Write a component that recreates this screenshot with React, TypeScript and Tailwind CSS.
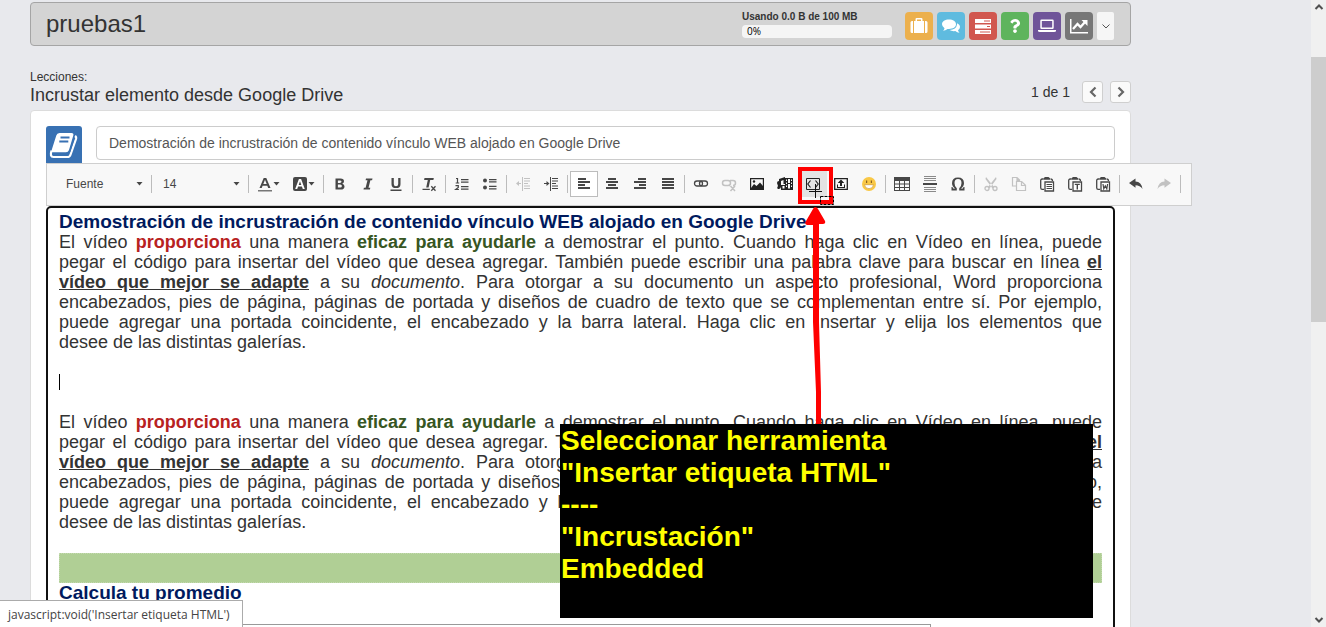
import type { ReactNode } from "react";
import { FaQuestion } from "react-icons/fa";

const ink = "#474747";

function Glyph({ children, faded = false }: { children: ReactNode; faded?: boolean }) {
  return (
    <svg
      viewBox="0 0 16 16"
      className={faded ? "size-4 shrink-0 opacity-30" : "size-4 shrink-0"}
      fill={ink}
      stroke="none"
      aria-hidden="true"
    >
      {children}
    </svg>
  );
}

function Caret() {
  return (
    <svg viewBox="0 0 7 4" className="h-1 w-[7px] shrink-0" fill={ink} aria-hidden="true">
      <path d="M0.5 0h6L3.5 3.5z" />
    </svg>
  );
}

function Separator() {
  return <span className="mx-0.5 h-[18px] w-px shrink-0 bg-[#bcbcbc]" />;
}

function Tool({ label, active = false, children }: { label: string; active?: boolean; children: ReactNode }) {
  return (
    <button
      type="button"
      aria-label={label}
      title={label}
      className={
        active
          ? "flex h-[26px] w-7 shrink-0 items-center justify-center border border-[#bcbcbc] bg-white"
          : "flex h-[26px] w-7 shrink-0 items-center justify-center"
      }
    >
      {children}
    </button>
  );
}

function Lines({ rows }: { rows: [number, number][] }) {
  return (
    <>
      {rows.map(([x, w], i) => (
        <rect key={i} x={x} y={2 + i * 3} width={w} height="2" />
      ))}
    </>
  );
}

const clipboardBack = (
  <>
    <path d="M4.500 3H3.200Q1.700 3 1.700 4.500v7.200Q1.700 13.300 3.200 13.300H5" fill="none" stroke={ink} strokeWidth="1.300" />
    <path d="M4.500 3.700V2.300L6 1h3.500L11 2.300v1.400z" />
    <path d="M11.500 3q2 0 2 2" fill="none" stroke={ink} strokeWidth="1.300" />
    <path d="M6 6h8.500v9H6z" fill="#fff" stroke={ink} strokeWidth="1.300" />
  </>
);

function Toolbar() {
  return (
    <div
      role="toolbar"
      aria-label="Editor"
      className="-mr-[77px] flex h-[43px] items-center border border-[#cfcfcf] bg-[#f8f8f8] pb-px pl-[5px] text-[12px] text-[#474747]"
    >
      <div className="grid h-[26px] w-[97px] shrink-0 items-center">
        <select aria-label="Fuente" className="col-start-1 row-start-1 appearance-none bg-transparent pl-3.5">
          <option>Fuente</option>
        </select>
        <span className="pointer-events-none col-start-1 row-start-1 mr-1.5 justify-self-end">
          <Caret />
        </span>
      </div>
      <Separator />
      <div className="grid h-[26px] w-[92px] shrink-0 items-center">
        <select aria-label="Tamaño" className="col-start-1 row-start-1 appearance-none bg-transparent pl-[9px]">
          <option>14</option>
        </select>
        <span className="pointer-events-none col-start-1 row-start-1 mr-1.5 justify-self-end">
          <Caret />
        </span>
      </div>
      <Separator />
      <button type="button" aria-label="Color de texto" className="flex h-[26px] w-[35px] shrink-0 items-center justify-center">
        <Glyph>
          <path d="M2.500 12 6.700 2h2.600l4.200 10h-2.300l-.9-2.300H5.600L4.700 12zM6.300 8h3.400L8 3.800z" />
          <rect x="1" y="14" width="14" height="1.500" fill="#777" />
        </Glyph>
        <Caret />
      </button>
      <button type="button" aria-label="Color de fondo" className="flex h-[26px] w-[35px] shrink-0 items-center justify-center">
        <Glyph>
          <rect x="1" y="1" width="14" height="14" rx="2" />
          <path
            fill="#fff"
            fillRule="evenodd"
            d="M3.200 13 6.900 3h2.200l3.700 10h-2l-.9-2.500H6.100L5.200 13zM6.700 9h2.600L8 5.200z"
          />
        </Glyph>
        <Caret />
      </button>
      <Separator />
      <Tool label="Negrita">
        <Glyph>
          <path
            fillRule="evenodd"
            d="M3.500 2.500h5q3.500 0 3.500 2.800 0 1.900-1.700 2.400 2.200.5 2.200 2.700 0 3.100-3.700 3.100H3.500zM5.900 4.400v2.500h2q1.600 0 1.600-1.300 0-1.200-1.600-1.200zm0 4.200v3h2.300q1.700 0 1.700-1.500t-1.700-1.500z"
          />
        </Glyph>
      </Tool>
      <Tool label="Cursiva">
        <Glyph>
          <path d="M6 2.500h6.500l-.4 1.700h-1.700L8.500 11.800h1.800l-.4 1.700H3.500l.4-1.700h1.700l1.900-7.600H5.600z" />
        </Glyph>
      </Tool>
      <Tool label="Subrayado">
        <Glyph>
          <path d="M3.500 2h2.300v6q0 2.200 2.200 2.200T10.200 8V2h2.300v6.200q0 3.900-4.500 3.900T3.500 8.200zM2.500 13.500h11V15h-11z" />
        </Glyph>
      </Tool>
      <Separator />
      <Tool label="Eliminar formato">
        <Glyph>
          <path d="M3.500 2h9.300l-.4 2H9.200l-1.600 7.500H5.200L6.800 4H3.100zM1.500 12.700h7.300v1.200H1.500z" />
          <path d="m10.300 10.300 4.200 4.400m0-4.400-4.200 4.400" stroke={ink} strokeWidth="1.300" />
        </Glyph>
      </Tool>
      <Separator />
      <Tool label="Lista numerada">
        <Glyph>
          <path
            d="M2 2.500h1.500V7M1.700 7h3.500M1.500 9.700h2.800v1.800l-2.600 2h3.200"
            fill="none"
            stroke={ink}
            strokeWidth="1.200"
          />
          <path d="M7 3h7.500v1.200H7zm0 2.500h7.500v1.200H7zm0 4.500h7.500v1.200H7zm0 2.500h7.500v1.200H7z" />
        </Glyph>
      </Tool>
      <Tool label="Lista con viñetas">
        <Glyph>
          <circle cx="3" cy="4.500" r="2" />
          <circle cx="3" cy="11.500" r="2" />
          <path d="M7 3h7.500v1.200H7zm0 2.300h7.500v1.200H7zm0 4.500h7.500V11H7zm0 2.500h7.500v1.200H7z" />
        </Glyph>
      </Tool>
      <Separator />
      <Tool label="Disminuir sangría">
        <Glyph faded>
          <path d="M9 2h6v1H9zm0 2.500h6v1H9zM9 7h4v1H9zm0 2.500h6v1H9zM9 12h6v1H9zM7 1h1v14H7zM3 7h3v1H3z" />
          <path d="M1 7.500 4 5v5z" />
        </Glyph>
      </Tool>
      <Tool label="Aumentar sangría">
        <Glyph>
          <path d="M9 2h6v1H9zm0 2.500h6v1H9zM9 7h4v1H9zm0 2.500h6v1H9zM9 12h6v1H9zM7 1h1v14H7zM1 7h3v1H1z" />
          <path d="M6.500 7.500 3.500 5v5z" />
        </Glyph>
      </Tool>
      <Separator />
      <Tool label="Alinear a la izquierda" active>
        <Glyph>
          <Lines rows={[[2, 8], [2, 12], [2, 7], [2, 12]]} />
        </Glyph>
      </Tool>
      <Tool label="Centrar">
        <Glyph>
          <Lines rows={[[4, 8], [2, 12], [4, 8], [2, 12]]} />
        </Glyph>
      </Tool>
      <Tool label="Alinear a la derecha">
        <Glyph>
          <Lines rows={[[6, 8], [2, 12], [7, 7], [2, 12]]} />
        </Glyph>
      </Tool>
      <Tool label="Justificar">
        <Glyph>
          <Lines rows={[[2, 12], [2, 12], [2, 12], [2, 12]]} />
        </Glyph>
      </Tool>
      <Separator />
      <Tool label="Insertar vínculo">
        <Glyph>
          <g fill="none" stroke={ink} strokeWidth="1.300">
            <rect x="1.500" y="5" width="8" height="5" rx="2.500" />
            <rect x="6.500" y="5" width="8" height="5" rx="2.500" />
          </g>
        </Glyph>
      </Tool>
      <Tool label="Eliminar vínculo">
        <Glyph faded>
          <g fill="none" stroke={ink} strokeWidth="1.500">
            <rect x="1.500" y="4.500" width="8" height="5" rx="2.500" />
            <path d="M9 9.500H8M9 4.500h3q2.500 0 2.500 2.500T12 9.500M9.500 10l4.500 5m0-5-4.500 5" />
          </g>
        </Glyph>
      </Tool>
      <Tool label="Imagen">
        <Glyph>
          <path fillRule="evenodd" fill="#222" d="M1 2h14v12H1zM2.200 3.200v9.600h11.600V3.200z" />
          <path fill="#222" d="m2 12 3-4 2.500 2L11 6.500l3 3.500v3H2z" />
          <circle cx="5" cy="5.500" r="1.200" fill="#222" />
        </Glyph>
      </Tool>
      <Tool label="Insertar multimedia">
        <Glyph>
          <path d="M0 7Q0 5 2 5V3l6-2v7H6.500V4L4 5v6q-.5 2.500-3 2-1.500-1 0-3z" fill="#222" />
          <path d="M8 2h8v12H4V9h4z" fill="#222" />
          <path
            d="M9 3.500h1V5H9zm0 3h1V8H9zm0 3h1V11H9zm5-6h1V5h-1zm0 3h1V8h-1zm0 3h1V11h-1zM11 3h2v4h-2zm0 5h2v4.500h-2zM5.500 10h2v2.500h-2z"
            fill="#f8f8f8"
          />
        </Glyph>
      </Tool>
      <button
        type="button"
        aria-label="Insertar etiqueta HTML"
        className="flex h-[26px] w-7 shrink-0 items-center justify-center bg-[#e3e3e3]"
      >
        <Glyph>
          <path d="M1.500 2.500h13v11h-13z" fill="none" stroke="#222" />
          <path d="M5.500 4.500 2.800 8l2.700 3.500M10.500 4.500 13.200 8l-2.700 3.500" fill="none" stroke="#222" strokeWidth="1.200" />
        </Glyph>
      </button>
      <Tool label="Subir archivo">
        <Glyph>
          <path d="M1.700 2.700h12.600v10.600H1.700z" fill="none" stroke="#222" strokeWidth="1.300" />
          <path d="m8 3.500 3.300 3.500H9v3H7V7H4.700zM4 8.500h1V11h6V8.500h1V12H4z" fill="#222" />
        </Glyph>
      </Tool>
      <Tool label="Emoticonos">
        <Glyph>
          <circle cx="8" cy="8" r="7" fill="#f9c846" />
          <path d="M3.500 8.700h9Q12 12.700 8 12.700T3.500 8.700z" fill="#fff" stroke="#c8912f" strokeWidth=".6" />
          <path d="M5 4.500h1.200V7H5zm4.800 0H11V7H9.800z" fill="#8a6221" />
        </Glyph>
      </Tool>
      <Separator />
      <Tool label="Tabla">
        <Glyph>
          <path
            fillRule="evenodd"
            d="M0 1h16v14H0zM1 5v2.500h4V5zm5 0v2.500h4V5zm5 0v2.500h4V5zM1 8.500V11h4V8.500zm5 0V11h4V8.500zm5 0V11h4V8.500zM1 12v2h4v-2zm5 0v2h4v-2zm5 0v2h4v-2z"
          />
        </Glyph>
      </Tool>
      <Tool label="Línea horizontal">
        <Glyph>
          <path d="M2 0h12v1H2zm0 2h12v1H2zm0 2h12v1H2zm0 7h12v1H2zm0 2h12v1H2zm0 2h12v1H2z" fill="#8a8a8a" />
          <path d="M1 7h14v2H1z" />
        </Glyph>
      </Tool>
      <Tool label="Carácter especial">
        <Glyph>
          <path d="M1.500 14.500V11h1l.6 1.500h2.200Q2 10.500 2 7.200 2 1.500 8 1.500t6 5.700q0 3.300-3.300 5.300h2.200l.6-1.500h1v3.500H9.200v-2.200q2.300-1.700 2.300-5.200 0-4-3.500-4t-3.500 4q0 3.500 2.300 5.200v2.200z" />
        </Glyph>
      </Tool>
      <Separator />
      <Tool label="Cortar">
        <Glyph faded>
          <path d="m3 1 8 10-1.500 1.500L2.500 3zM13 1 5 11l1.500 1.500 7-9.500z" />
          <circle cx="4" cy="12.500" r="2" fill="none" stroke={ink} strokeWidth="1.300" />
          <circle cx="12" cy="12.500" r="2" fill="none" stroke={ink} strokeWidth="1.300" />
        </Glyph>
      </Tool>
      <Tool label="Copiar">
        <Glyph faded>
          <path
            d="M5 10H1.500V1.500H6l3 3M6 1.500V4.500h3M5.500 5.500h5.200l3.800 3.800v5.200h-9zM10.500 5.500v4h4"
            fill="none"
            stroke={ink}
            strokeWidth="1.200"
          />
        </Glyph>
      </Tool>
      <Tool label="Pegar">
        <Glyph>
          {clipboardBack}
          <path d="M7.500 8H13v1H7.500zm0 2H13v1H7.500zm0 2H13v1H7.500z" />
        </Glyph>
      </Tool>
      <Tool label="Pegar como texto">
        <Glyph>
          {clipboardBack}
          <path d="M7.800 7.700h5V9H11v4.500H9.600V9H7.800z" />
        </Glyph>
      </Tool>
      <Tool label="Pegar desde Word">
        <Glyph>
          {clipboardBack}
          <path d="m8 8 .8 4.800 1.500-3 1.500 3 .8-4.800" fill="none" stroke={ink} strokeWidth="1.200" />
        </Glyph>
      </Tool>
      <Separator />
      <Tool label="Deshacer">
        <Glyph>
          <path d="M1 7 7.500 2.500v3q6 .3 7 7.500Q12 9.300 7.500 9.300v2.500z" />
        </Glyph>
      </Tool>
      <Tool label="Rehacer">
        <Glyph faded>
          <path d="M15 7 8.500 2.500v3q-6 .3-7 7.500Q4 9.300 8.500 9.300v2.500z" />
        </Glyph>
      </Tool>
      <Separator />
    </div>
  );
}

function AppButton({ label, color, children }: { label: string; color: string; children: ReactNode }) {
  return (
    <a
      href="#"
      aria-label={label}
      className={`flex size-7 items-center justify-center rounded-[4px] text-white ${color}`}
    >
      {children}
    </a>
  );
}

function HeaderIcon({ children }: { children: ReactNode }) {
  return (
    <svg viewBox="0 0 20 18" className="h-[18px] w-5" fill="currentColor" aria-hidden="true">
      {children}
    </svg>
  );
}

function Header() {
  return (
    <header className="flex h-11 items-center rounded-[4px] border border-[#a5a5a5] bg-[#d4d4d4] pr-4 pl-[15px]">
      <h1 className="flex-1 text-[24px] leading-7 text-[#333]">pruebas1</h1>
      <div className="mr-[13px] w-[150px] text-[10px] text-[#333]">
        <p className="mt-[-2px] leading-[16px] font-bold">Usando 0.0 B de 100 MB</p>
        <div className="h-[13px] rounded-[4px] bg-[#f5f5f5] pl-[5px] font-['Open_Sans',sans-serif] leading-[13px] text-black">
          0%
        </div>
      </div>
      <nav className="mt-1 flex gap-1">
        <AppButton label="Recursos" color="bg-[#ecb04d]">
          <HeaderIcon>
            <path
              fillRule="evenodd"
              d="M6.500 4V2.200Q6.500 1 7.700 1h4.600q1.200 0 1.200 1.200V4H15v12H5V4zM8 4h4V2.500H8zM4 4v12H3q-1.500 0-1.500-1.500v-9Q1.500 4 3 4zm12 0h1q1.500 0 1.500 1.500v9Q18.500 16 17 16h-1z"
            />
          </HeaderIcon>
        </AppButton>
        <AppButton label="Foros" color="bg-[#5fbbdf]">
          <HeaderIcon>
            <path d="M8 2.500c4 0 7 2 7 4.800S12 12 8 12l-1.500-.1Q4.500 13.500 2 13.700q1.200-1 1.500-2.500Q1 9.700 1 7.300C1 4.500 4 2.500 8 2.500z" />
            <path d="M16 6.200c1.800.8 3 2.100 3 3.700q0 2-2 3.400.3 1.500 1.500 2.400-2.500-.1-4.200-1.600-3.300.5-5.800-1 6.800-.3 7.500-5.500z" />
          </HeaderIcon>
        </AppButton>
        <AppButton label="Tareas" color="bg-[#d1574f]">
          <HeaderIcon>
            <path fillRule="evenodd" d="M2 2h16v4H2zm9 1.500v1h6v-1zM2 7.500h16v4H2zM14 9v1h3V9zM2 13h16v4H2zm5 1.500v1h10v-1z" />
          </HeaderIcon>
        </AppButton>
        <AppButton label="Ayuda" color="bg-[#5eb45d]">
          <FaQuestion className="size-3.5" />
        </AppButton>
        <AppButton label="Aula" color="bg-[#6f5499]">
          <HeaderIcon>
            <path
              fillRule="evenodd"
              d="M4.500 2.500h11q1.200 0 1.200 1.200v7.100q0 1.200-1.200 1.200h-11q-1.200 0-1.200-1.200V3.700q0-1.200 1.200-1.200zM4.800 4v6.500h10.400V4zM1 13h18v1q0 1-2 1H3q-2 0-2-1z"
            />
          </HeaderIcon>
        </AppButton>
        <AppButton label="Estadísticas" color="bg-[#777777]">
          <HeaderIcon>
            <path d="M1 2h1.500v13H19v1.500H1z" />
            <path d="m4 12 4.500-5 3 3 4.500-5" fill="none" stroke="currentColor" strokeWidth="2.300" />
            <path d="M12.500 3h6v6z" />
          </HeaderIcon>
        </AppButton>
        <button
          type="button"
          aria-label="Más opciones"
          className="flex h-7 w-[17px] items-center justify-center rounded-[2px] bg-[#f6f6f6]"
        >
          <svg viewBox="0 0 8 5" className="h-[5px] w-2" fill="none" stroke="#555" aria-hidden="true">
            <path d="m.5.5 3.500 3.500L7.500.5" />
          </svg>
        </button>
      </nav>
    </header>
  );
}

function PagerButton({ label, path }: { label: string; path: string }) {
  return (
    <button
      type="button"
      aria-label={label}
      className="flex h-[22px] w-[21px] items-center justify-center rounded-[3px] border border-[#cfcfcf] bg-[#fafafa]"
    >
      <svg viewBox="0 0 8 12" className="h-3 w-2" fill="none" stroke="#666" strokeWidth="2.200" aria-hidden="true">
        <path d={path} />
      </svg>
    </button>
  );
}

function FullLine({ children }: { children: ReactNode }) {
  return <span className="block [text-align-last:justify]">{children} </span>;
}

function Paragraph() {
  return (
    <p className="text-[18px]">
      <FullLine>
        El vídeo <strong className="text-[#b8221f]">proporciona</strong> una manera{" "}
        <strong className="text-[#375623]">eficaz para ayudarle</strong> a demostrar el punto. Cuando haga clic en
        Vídeo en línea, puede
      </FullLine>
      <FullLine>
        pegar el código para insertar del vídeo que desea agregar. También puede escribir una palabra clave para buscar
        en línea <strong className="underline">el</strong>
      </FullLine>
      <FullLine>
        <strong className="underline">vídeo que mejor se adapte</strong> a su <em>documento</em>. Para otorgar a su
        documento un aspecto profesional, Word proporciona
      </FullLine>
      <FullLine>
        encabezados, pies de página, páginas de portada y diseños de cuadro de texto que se complementan entre sí. Por
        ejemplo,
      </FullLine>
      <FullLine>
        puede agregar una portada coincidente, el encabezado y la barra lateral. Haga clic en Insertar y elija los
        elementos que
      </FullLine>
      <span className="block">desee de las distintas galerías.</span>
    </p>
  );
}

function Editor() {
  return (
    <div className="min-h-[500px] rounded-[5px] border-2 border-[#111] bg-white px-[11px] pt-1 text-[19px] leading-5 text-[#333]">
      <h3 className="font-bold text-[#001a5e]">
        Demostración de incrustración de contenido vínculo WEB alojado en Google Drive
      </h3>
      <Paragraph />
      <div className="flex h-[60px] items-center">
        <span className="h-4 w-px bg-black" />
      </div>
      <Paragraph />
      <div className="mt-[21px] h-[30px] border border-dotted border-[#c3d9ae] bg-[#b0cf95]" />
      <h3 className="font-bold text-[#001a5e]">Calcula tu promedio</h3>
      <div className="mt-[21px] h-10 max-w-[872px] border border-[#999]" />
    </div>
  );
}

function Annotations() {
  return (
    <>
      <svg
        viewBox="0 0 50 260"
        className="pointer-events-none absolute top-[166px] left-[795px] h-[260px] w-[50px]"
        aria-hidden="true"
      >
        <path d="M5 3h31v33H5z" fill="none" stroke="#f00" strokeWidth="4" />
        <path d="M20.500 18v14M14 25.500h13" stroke="#111" fill="none" />
        <path d="M25.500 30.500h13v8h-13z" fill="none" stroke="#000" strokeDasharray="3 1" />
        <path d="M20 41Q22 41 23 43l7 12q1 3-2 3h-4v98l2 70v32h-5v-32l-3-70V59h-6q-3-1-1-4l7-12q1-2 2-2z" fill="#f00" />
      </svg>
      <aside className="absolute top-[424px] left-[560px] h-[194px] w-[533px] bg-black pt-px pl-px text-[28px] leading-8 font-bold text-[#ff0]">
        <p>Seleccionar herramienta</p>
        <p>"Insertar etiqueta HTML"</p>
        <p>----</p>
        <p>"Incrustación"</p>
        <p>Embedded</p>
      </aside>
      <div className="absolute bottom-0 left-0 h-[27px] border-t border-r border-[#ababab] bg-white pr-3 pl-2 font-['Open_Sans',sans-serif] text-[12px] leading-[28px] text-[#444]">
        javascript:void('Insertar etiqueta HTML')
      </div>
    </>
  );
}

export default function App() {
  return (
    <div className="relative flex h-screen overflow-hidden bg-[#e8e9ed] font-['Liberation_Sans',Arial,sans-serif] text-[#333]">
      <main className="min-w-0 flex-1 pt-0.5 pr-[180px] pl-[30px]">
        <Header />
        <div className="flex h-16 items-end pb-[5px]">
          <div className="flex-1">
            <p className="text-[12px] leading-4">Lecciones:</p>
            <h2 className="text-[18px] leading-5">Incrustar elemento desde Google Drive</h2>
          </div>
          <div className="flex items-center pb-0.5 text-[14px]">
            <span className="mr-3">1 de 1</span>
            <div className="flex gap-[7px]">
              <PagerButton label="Anterior" path="M6.500 1.500 2 6l4.500 4.500" />
              <PagerButton label="Siguiente" path="M1.500 1.500 6 6l-4.500 4.500" />
            </div>
          </div>
        </div>
        <section className="rounded-t-[4px] border border-[#dcdcdc] bg-white px-[15px] pt-[15px]">
          <div className="flex gap-3.5">
            <div className="flex h-[37px] w-9 items-center justify-center rounded-t-[3px] bg-[#3871b3]">
              <svg viewBox="0 0 32 32" className="size-8" fill="none" aria-hidden="true">
                <path
                  d="M11.500 4h12q2.500 0 1.800 2.500L21 21q-.8 2.300-3 2.300H5q-2 0-1.300-2.300L8.300 6.500Q9 4 11.500 4z"
                  fill="#fff"
                />
                <path
                  d="M3.500 21.500q-2 6.500 2 6.500h14q2.300 0 3-2.300L28 10q.6-2-1-3"
                  stroke="#fff"
                  strokeWidth="2.200"
                />
                <path d="M12.500 8.500h9M11.300 12.500h9" stroke="#3871b3" strokeWidth="1.800" />
                <path d="M5.500 25h13.300q2.200 0 3-2.500L26 9" stroke="#3871b3" strokeWidth="1.400" />
              </svg>
            </div>
            <input
              aria-label="Título de la lección"
              defaultValue="Demostración de incrustración de contenido vínculo WEB alojado en Google Drive"
              className="h-[34px] min-w-0 flex-1 rounded-[4px] border border-[#ccc] bg-white px-3 text-[14px] text-[#555]"
            />
          </div>
          <Toolbar />
          <Editor />
        </section>
      </main>
      <div className="flex w-[15px] flex-col items-center bg-[#f0f0f0]">
        <svg viewBox="0 0 10 6" className="mt-1 h-1.5 w-2.5" fill="none" stroke="#505050" strokeWidth="2" aria-hidden="true">
          <path d="m1.500 5 3.500-3.500L8.500 5" />
        </svg>
        <div className="mt-[47px] h-[265px] w-full bg-[#cdcdcd]" />
        <svg viewBox="0 0 10 6" className="mt-auto mb-1 h-1.5 w-2.5" fill="none" stroke="#505050" strokeWidth="2" aria-hidden="true">
          <path d="M1.500 1 5 4.500 8.500 1" />
        </svg>
      </div>
      <Annotations />
    </div>
  );
}
